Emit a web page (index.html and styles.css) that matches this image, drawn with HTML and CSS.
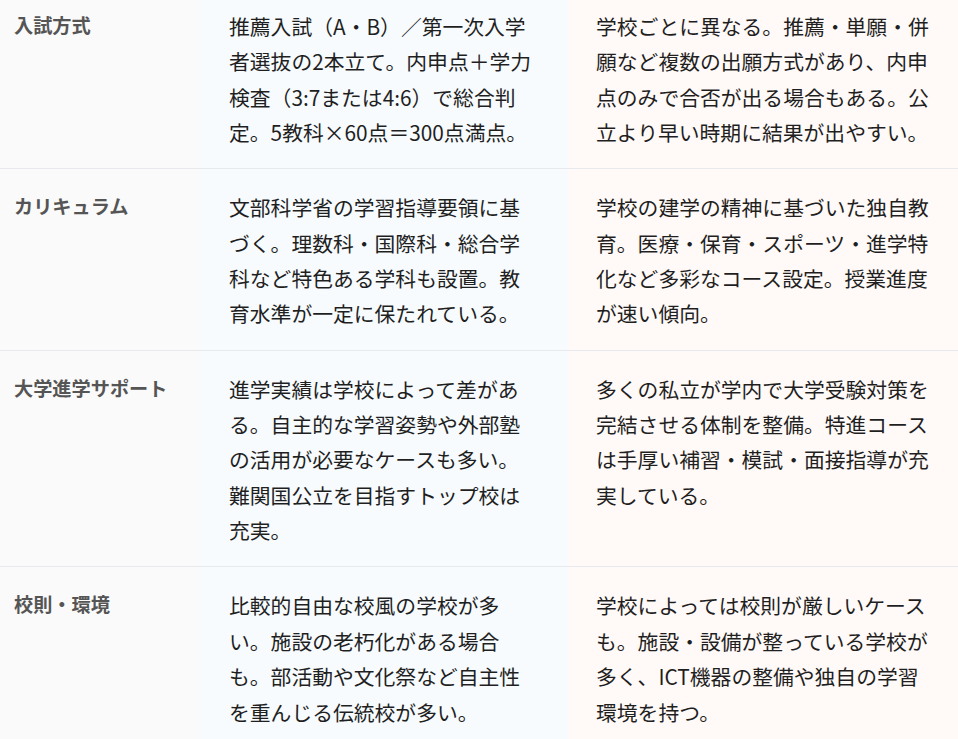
FILE: index.html
```html
<!DOCTYPE html>
<html lang="ja">
<head>
<meta charset="utf-8">
<title>公立と私立の比較</title>
<link rel="stylesheet" href="styles.css">
</head>
<body>
<table class="compare">
  <colgroup>
    <col class="col-label">
    <col class="col-public">
    <col class="col-private">
  </colgroup>
  <tbody>
    <tr>
      <th class="label">入試方式</th>
      <td class="public">推薦入試（A・B）／第一次入学者選抜の2本立て。内申点＋学力検査（3:7または4:6）で総合判定。5教科×60点＝300点満点。</td>
      <td class="private">学校ごとに異なる。推薦・単願・併願など複数の出願方式があり、内申点のみで合否が出る場合もある。公立より早い時期に結果が出やすい。</td>
    </tr>
    <tr>
      <th class="label">カリキュラム</th>
      <td class="public">文部科学省の学習指導要領に基づく。理数科・国際科・総合学科など特色ある学科も設置。教育水準が一定に保たれている。</td>
      <td class="private">学校の建学の精神に基づいた独自教育。医療・保育・スポーツ・進学特化など多彩なコース設定。授業進度が速い傾向。</td>
    </tr>
    <tr>
      <th class="label">大学進学サポート</th>
      <td class="public">進学実績は学校によって差がある。自主的な学習姿勢や外部塾の活用が必要なケースも多い。難関国公立を目指すトップ校は充実。</td>
      <td class="private">多くの私立が学内で大学受験対策を完結させる体制を整備。特進コースは手厚い補習・模試・面接指導が充実している。</td>
    </tr>
    <tr>
      <th class="label">校則・環境</th>
      <td class="public">比較的自由な校風の学校が多い。施設の老朽化がある場合も。部活動や文化祭など自主性を重んじる伝統校が多い。</td>
      <td class="private">学校によっては校則が厳しいケースも。施設・設備が整っている学校が多く、ICT機器の整備や独自の学習環境を持つ。</td>
    </tr>
  </tbody>
</table>
</body>
</html>
```

FILE: styles.css
```css
html, body {
  margin: 0;
  padding: 0;
  background: #ffffff;
}

body {
  font-family: "Noto Sans CJK JP", "Noto Sans", sans-serif;
  color: #1f1f1f;
  overflow: hidden;
}

.compare {
  width: 958px;
  border-collapse: collapse;
  table-layout: fixed;
  margin-top: -12px;
}

.col-label { width: 200px; }
.col-public { width: 368px; }
.col-private { width: 390px; }

.compare tr {
  border-bottom: 1px solid #e8e9ec;
}

.compare th,
.compare td {
  vertical-align: top;
  text-align: left;
  padding: 21px 28px 18px 28px;
  font-size: 20.8px;
  line-height: 1.7;
  font-weight: 400;
  word-break: normal;
  line-break: strict;
}

.compare .label {
  background: #fafafa;
  color: #555555;
  font-weight: 700;
  font-size: 19.2px;
  padding-left: 14px;
  padding-right: 10px;
}

.compare .public {
  background: #f7fbfe;
  padding-left: 29px;
  padding-right: 34px;
}

.compare .private {
  background: #fffaf8;
}
```
